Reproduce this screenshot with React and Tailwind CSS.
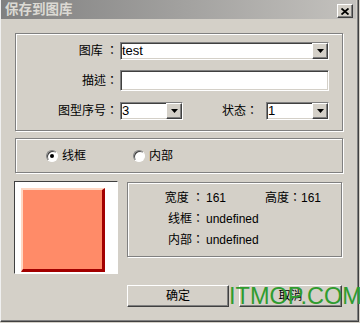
import React from 'react'

const FONT = { fontFamily: "'Liberation Sans', 'Noto Sans CJK TC', sans-serif" }

const sunken =
  'border border-t-[#808080] border-l-[#808080] border-r-white border-b-white shadow-[inset_1px_1px_0_#404040,inset_-1px_-1px_0_#d4d0c8]'
const raised =
  'border border-t-white border-l-white border-r-[#404040] border-b-[#404040] shadow-[inset_-1px_-1px_0_#808080] bg-[#d4d0c8]'
const etched = 'border border-[#808080] shadow-[inset_1px_1px_0_#fff,1px_1px_0_#fff]'

function Arrow() {
  return (
    <svg width="7" height="4" viewBox="0 0 7 4">
      <polygon points="0,0 7,0 3.5,4" fill="#000" />
    </svg>
  )
}

function Select({ value, width }) {
  return (
    <div className={`flex bg-white ${sunken}`} style={{ width }}>
      <span className="flex-1 pl-[1px] text-[13px] leading-[16px] text-black">{value}</span>
      <div className={`w-[16px] h-[16px] flex items-center justify-center ${raised}`}>
        <Arrow />
      </div>
    </div>
  )
}

function Radio({ checked, label }) {
  return (
    <div className="flex items-center">
      <div className="w-[12px] h-[12px] rounded-full bg-white border border-t-[#808080] border-l-[#808080] border-r-white border-b-white shadow-[inset_1px_1px_0_#404040] flex items-center justify-center">
        {checked && <div className="w-[4px] h-[4px] rounded-full bg-black" />}
      </div>
      <span className="ml-[4px] text-[12px] text-black">{label}</span>
    </div>
  )
}

export default function App() {
  return (
    <div className="relative w-[360px] h-[323px] bg-[#d4d0c8] overflow-hidden" style={FONT}>
      <div className="w-[359px] h-[322px] border-l border-l-[#f0f0f0] border-r border-r-[#404040] border-b border-b-[#404040] shadow-[inset_-1px_-1px_0_#808080] flex flex-col">
        {/* title bar */}
        <div className="h-[19px] w-[355px] bg-gradient-to-r from-[#808080] to-[#c4c2be] flex items-start justify-between pl-[4px] pr-[3px]">
          <span className="text-[13.5px] font-bold leading-[19px] text-[#dcdad4]">保存到图库</span>
          <div className={`mt-[4px] w-[16px] h-[14px] flex items-center justify-center ${raised}`}>
            <svg width="8" height="7" viewBox="0 0 8 7">
              <path d="M0.5 0.5 L7.5 6.5 M7.5 0.5 L0.5 6.5" stroke="#000" strokeWidth="1.8" />
            </svg>
          </div>
        </div>

        <div className="pl-[14px]">
          {/* group 1 */}
          <div className={`mt-[14px] w-[328px] h-[98px] pt-[7px] ${etched}`}>
            <div className="flex items-center h-[20px]">
              <span className="w-[102px] text-right text-[12px] text-black">图库 ：</span>
              <div className="ml-[2px]">
                <Select value="test" width={209} />
              </div>
            </div>
            <div className="flex items-center h-[21px] mt-[9px]">
              <span className="w-[102px] text-right text-[12px] text-black">描述：</span>
              <div className={`ml-[2px] w-[209px] h-[21px] bg-white ${sunken}`} />
            </div>
            <div className="flex items-center h-[20px] mt-[10px] mr-[13px]">
              <span className="w-[102px] text-right text-[12px] text-black">图型序号：</span>
              <div className="ml-[2px]">
                <Select value="3" width={63} />
              </div>
              <span className="flex-1 text-right pr-[8px] text-[12px] text-black">状态：</span>
              <Select value="1" width={63} />
            </div>
          </div>

          {/* group 2 */}
          <div className={`mt-[7px] w-[328px] h-[35px] flex items-center pl-[30px] ${etched}`}>
            <Radio checked label="线框" />
            <div className="ml-[47px]">
              <Radio label="内部" />
            </div>
          </div>

          {/* bottom */}
          <div className="mt-[8px] -ml-[1px] flex">
            <div className="w-[104px] h-[93px] bg-white border border-t-[#404040] border-l-[#404040] border-r-white border-b-white pl-[6px] pt-[6px]">
              <div className="w-[84px] h-[84px] bg-[#ff8b68] border-t-2 border-l-2 border-t-[#ffd8c4] border-l-[#ffd8c4] border-r-[3px] border-b-[3px] border-r-[#a30000] border-b-[#a30000]" />
            </div>
            <div className="ml-[9px] w-[215px]">
              <div className={`mt-[1px] h-[75px] pt-[5px] ${etched} text-[12px] leading-[21px] text-black`}>
                <div className="flex">
                  <span className="w-[76px] text-right">宽度 ：</span>
                  <span className="ml-[2px] w-[59px]">161</span>
                  <span>高度：161</span>
                </div>
                <div className="flex">
                  <span className="w-[76px] text-right">线框：</span>
                  <span className="ml-[2px]">undefined</span>
                </div>
                <div className="flex">
                  <span className="w-[76px] text-right">内部：</span>
                  <span className="ml-[2px]">undefined</span>
                </div>
              </div>
              <div className="mt-[28px] flex">
                <button className={`w-[102px] h-[22px] text-[12px] text-black ${raised}`}>确定</button>
                <button className={`ml-[10px] w-[103px] h-[22px] text-[12px] text-black ${raised}`}>取消</button>
              </div>
            </div>
          </div>
        </div>
      </div>

      {/* watermark */}
      <span className="absolute left-[229px] top-[285px] text-[23.5px] leading-[23.5px] text-[#2f9c2f]">ITMOP.COM</span>
    </div>
  )
}
